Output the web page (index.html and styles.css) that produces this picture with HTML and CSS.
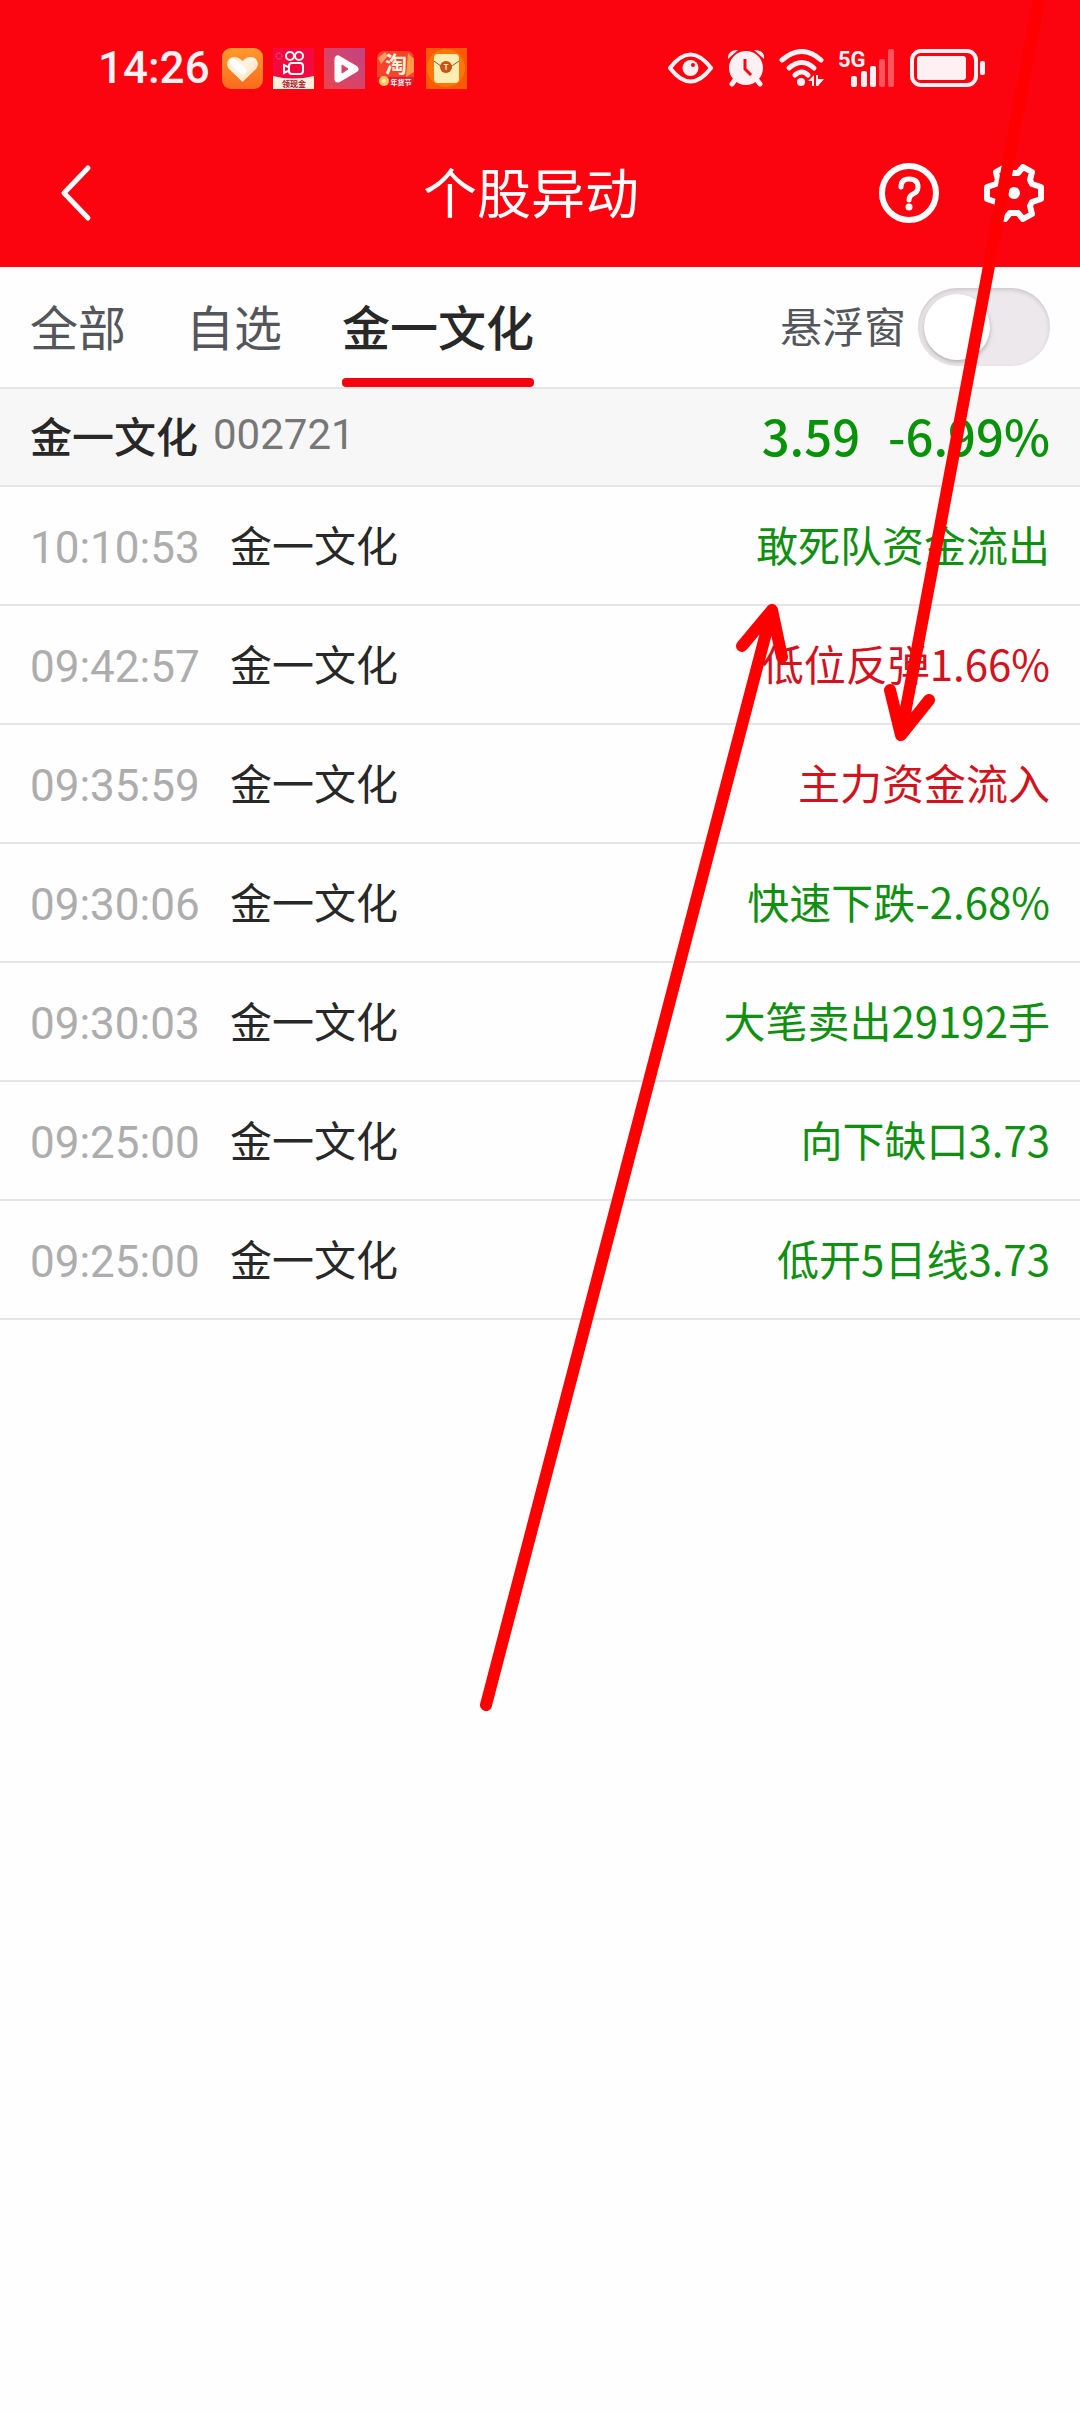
FILE: index.html
```
<!DOCTYPE html>
<html lang="zh-CN">
<head>
  <meta charset="UTF-8" />
  <meta name="viewport" content="width=device-width, initial-scale=1" />
  <title>个股异动</title>
  <link rel="stylesheet" href="styles.css">
</head>
<body>

  <header class="top">
    <div class="status-bar">
      <div class="status-left">
        <span class="clock">14:26</span>
        <svg class="app-icon" viewBox="0 0 41 41">
          <defs>
            <linearGradient id="orange" x1="0" y1="0" x2="0" y2="1"><stop offset="0" stop-color="#ff9a2c"/><stop offset="1" stop-color="#fb6a1c"/></linearGradient>
            <linearGradient id="cream" x1="0" y1="0" x2="1" y2="1"><stop offset="0" stop-color="#ffe3b4"/><stop offset=".4" stop-color="#fff4e4"/><stop offset="1" stop-color="#ffdcb0"/></linearGradient>
          </defs>
          <rect width="41" height="41" rx="9" fill="url(#orange)"/>
          <path d="M20.500 34 L7 21 C3 16 6 9 12 9 C16 9 18.500 11 20.500 13 C22.500 11 25 9 29 9 C35 9 38 16 34 21 Z" fill="url(#cream)"/>
          <path d="M11 14 L21 23" stroke="#fff" stroke-width="7" stroke-linecap="round"/>
        </svg>
        <svg class="app-icon" viewBox="0 0 41 41">
          <rect width="41" height="41" fill="#f2093f"/>
          <path d="M0 28 Q20 33 41 28 V41 H0 Z" fill="#fff0dc"/>
          <g fill="none" stroke="#fff" stroke-width="2">
            <circle cx="17" cy="8" r="4"/><circle cx="26" cy="8" r="4"/>
            <rect x="16" y="15" width="14" height="11" rx="3"/>
            <path d="M15 19 L11 17 V25 L15 23"/>
          </g>
          <circle cx="6" cy="8" r="3" fill="none" stroke="#ff7a90" stroke-dasharray="1 1"/>
          <text x="21" y="39" class="tag-red">领现金</text>
        </svg>
        <svg class="app-icon" viewBox="0 0 41 41">
          <defs><linearGradient id="pink" x1="1" y1="0" x2="0" y2="1"><stop offset="0" stop-color="#c14385"/><stop offset="1" stop-color="#e94450"/></linearGradient></defs>
          <rect width="41" height="41" fill="url(#pink)"/>
          <path d="M14 11 V31 L31 21 Z" fill="#fff" stroke="#fff" stroke-width="7" stroke-linejoin="round"/>
          <path d="M18 17 V25 L24 21 Z" fill="#d94468" stroke="#d94468" stroke-width="1" stroke-linejoin="round"/>
        </svg>
        <svg class="app-icon" viewBox="0 0 41 41">
          <rect x="2" y="3" width="37" height="35" rx="7" fill="#f5432c"/>
          <path d="M3 10 L10 4 L13 8 L6 16 Z" fill="#ff9a68"/>
          <path d="M33 5 L39 11 V24 L31 29 Z" fill="#ff9b4a"/>
          <path d="M2 29 H39 V31 Q39 38 32 38 H9 Q2 38 2 31 Z" fill="#e51b2d"/>
          <text x="21" y="24" class="tag-big">淘</text>
          <circle cx="9" cy="33" r="5" fill="#ffc35b"/>
          <circle cx="9" cy="33" r="2" fill="#fff0b0"/>
          <text x="26" y="37" class="tag-white">年货节</text>
        </svg>
        <svg class="app-icon" viewBox="0 0 41 41">
          <rect width="41" height="41" fill="#fb5a04"/>
          <circle cx="20" cy="20" r="19" fill="#fc7606"/>
          <rect x="8" y="6" width="25" height="29" rx="4" fill="#ffedb2"/>
          <path d="M8 13 Q20 25 33 13" fill="none" stroke="#9d4c1c" stroke-width="1"/>
          <circle cx="20" cy="19" r="6" fill="#c45516"/>
          <text x="20" y="22" class="tag-t">T</text>
        </svg>
      </div>

      <div class="status-right">
        <svg width="45" height="38" viewBox="0 0 45 38">
          <path d="M2 19 Q22.500 -8 43 19 Q22.500 46 2 19 Z" fill="none" stroke="#fff0f4" stroke-width="4" stroke-linejoin="round"/>
          <circle cx="22.500" cy="19" r="8" fill="#fff0f4"/>
          <circle cx="25" cy="16" r="2" fill="#fb0410"/>
        </svg>
        <svg width="38" height="38" viewBox="0 0 38 38">
          <circle cx="19" cy="19" r="17" fill="#fff0f4"/>
          <path d="M8 31 L5 35 M30 31 L33 35" stroke="#fff0f4" stroke-width="5" stroke-linecap="round"/>
          <path d="M1 10 Q0 1 11 1 Z M37 10 Q38 1 27 1 Z" fill="#fff0f4"/>
          <path d="M18 10 V20 L24 26" fill="none" stroke="#fb0410" stroke-width="3"/>
        </svg>
        <svg width="45" height="38" viewBox="1 0 45 38">
          <g fill="none" stroke="#fff0f4" stroke-width="5" stroke-linecap="round">
            <path d="M4 11 Q24 -6 43 11"/>
            <path d="M11 19 Q24 8 36 19"/>
            <path d="M17 26 Q24 20 30 26"/>
          </g>
          <circle cx="23" cy="33" r="4" fill="#fff0f4"/>
          <path d="M30 32 L36 26 V37 H34 V32 Z M38 26 H40 V30 H46 L40 37 H38 Z" fill="#fff0f4"/>
        </svg>
        <svg class="signal-icon" width="58" height="38" viewBox="0 0 58 38">
          <text x="0" y="18" class="net">5G</text>
          <g fill="#fff0f4">
            <rect x="13" y="27" width="6" height="11" rx="2"/>
            <rect x="23" y="22" width="6" height="16" rx="2"/>
            <rect x="32" y="17" width="6" height="21" rx="2"/>
          </g>
          <g fill="#ff5460">
            <rect x="41" y="10" width="6" height="28" rx="2"/>
            <rect x="50" y="0" width="6" height="38" rx="2"/>
          </g>
        </svg>
        <svg width="76" height="38" viewBox="0 0 76 38">
          <rect x="2" y="2" width="64" height="34" rx="9" fill="none" stroke="#fff0f4" stroke-width="4"/>
          <rect x="7" y="7" width="49" height="24" rx="3" fill="#fff0f4"/>
          <rect x="70" y="12" width="5" height="14" rx="2" fill="#fff0f4"/>
        </svg>
      </div>
    </div>

    <nav class="nav-bar">
      <button class="icon-btn back-btn" type="button" aria-label="返回">
        <svg width="32" height="58" viewBox="0 0 32 58"><path d="M28 4 L4 29 L28 54" fill="none" stroke="#fff" stroke-width="5" stroke-linecap="round" stroke-linejoin="round"/></svg>
      </button>
      <h1>个股异动</h1>
      <div class="nav-actions">
        <button class="icon-btn" type="button" aria-label="帮助">
          <svg width="60" height="60" viewBox="0 0 60 60">
            <circle cx="30" cy="30" r="27" fill="none" stroke="#fff" stroke-width="6"/>
            <path d="M22 24 Q22 16 30 16 Q39 16 39 24 Q39 29 34 31 Q30 33 30 37" fill="none" stroke="#fff" stroke-width="5" stroke-linecap="round"/>
            <circle cx="30" cy="44" r="3.500" fill="#fff"/>
          </svg>
        </button>
        <button class="icon-btn" type="button" aria-label="设置">
          <svg width="60" height="60" viewBox="-30 -30 60 60">
            <polygon points="27,-6 27,6 18,9 16,13 18,21 9,26 4,20 -4,20 -9,26 -18,21 -16,13 -18,9 -27,6 -27,-6 -18,-9 -16,-13 -18,-21 -9,-26 -4,-20 4,-20 9,-26 18,-21 16,-13 18,-9" fill="none" stroke="#fff" stroke-width="6" stroke-linejoin="round"/>
            <circle r="6" fill="#fff"/>
          </svg>
        </button>
      </div>
    </nav>
  </header>

  <div class="tab-bar">
    <div class="tabs">
      <button class="tab" type="button">全部</button>
      <button class="tab" type="button">自选</button>
      <button class="tab active" type="button">金一文化</button>
    </div>
    <div class="float-switch">
      <label for="float-window">悬浮窗</label>
      <input type="checkbox" id="float-window" class="switch" />
    </div>
  </div>

  <section class="stock">
    <h2>金一文化</h2>
    <span class="code">002721</span>
    <span class="price">3.59</span>
    <span class="change">-6.99%</span>
  </section>

  <table class="events">
    <tbody>
      <tr><td class="time">10:10:53</td><td>金一文化</td><td class="signal down">敢死队资金流出</td></tr>
      <tr><td class="time">09:42:57</td><td>金一文化</td><td class="signal up">低位反弹1.66%</td></tr>
      <tr><td class="time">09:35:59</td><td>金一文化</td><td class="signal up">主力资金流入</td></tr>
      <tr><td class="time">09:30:06</td><td>金一文化</td><td class="signal down">快速下跌-2.68%</td></tr>
      <tr><td class="time">09:30:03</td><td>金一文化</td><td class="signal down">大笔卖出29192手</td></tr>
      <tr><td class="time">09:25:00</td><td>金一文化</td><td class="signal down">向下缺口3.73</td></tr>
      <tr><td class="time">09:25:00</td><td>金一文化</td><td class="signal down">低开5日线3.73</td></tr>
    </tbody>
  </table>

  <!-- hand-drawn arrows over the list -->
  <svg class="marks" viewBox="0 0 1080 1720" aria-hidden="true">
    <path d="M1040 -6 L901 735 M890 690 L901 735 L929 700"/>
    <path d="M486 1705 L772 610 M742 646 L772 610 L782 657"/>
  </svg>

</body>
</html>
```
FILE: styles.css
```
* {
  box-sizing: border-box;
}

body {
  position: relative;
  margin: 0;
  min-height: 100vh;
  background-color: #fefefe;
  color: #282828;
  font-family: "Noto Sans CJK SC", sans-serif;
  font-size: 42px;
  line-height: 60px;
}

button {
  padding: 0;
  border: 0;
  background: none;
  color: inherit;
  font: inherit;
}

svg {
  display: block;
}

/* status bar + title */
.top {
  background-color: #fb0410;
  color: #fff;
}

.status-bar {
  display: flex;
  justify-content: space-between;
  align-items: center;
  height: 118px;
  padding: 18px 94px 0 98px;
}

.status-left,
.status-right {
  display: flex;
  align-items: center;
}

.status-left {
  gap: 10px;
}

.status-right {
  gap: 14px;
}

.clock {
  margin-right: 2px;
  color: #fff0f4;
  font-family: Roboto, sans-serif;
  font-size: 44px;
  font-weight: 500;
}

.app-icon {
  width: 41px;
  height: 41px;
}

.app-icon,
.signal-icon {
  overflow: visible;
}

.tag-red,
.tag-white,
.tag-big,
.tag-t {
  text-anchor: middle;
  font-weight: 700;
}

.tag-red {
  font-size: 8px;
  fill: #a8122a;
}

.tag-white {
  font-size: 7px;
  fill: #fff;
}

.tag-big {
  font-size: 22px;
  fill: #fff3dc;
}

.tag-t {
  font-size: 8px;
  fill: #ffe0a0;
}

.net {
  font-family: Roboto, sans-serif;
  font-size: 22px;
  font-weight: 700;
  fill: #fff0f4;
}

.nav-bar {
  display: grid;
  grid-template-columns: 1fr auto 1fr;
  align-items: center;
  height: 149px;
  padding: 0 36px 0 18px;
}

.nav-bar h1 {
  margin: 0;
  padding-bottom: 4px;
  font-size: 54px;
  font-weight: 400;
  line-height: 60px;
}

.icon-btn {
  display: flex;
  justify-content: center;
}

.back-btn {
  width: 116px;
}

.nav-actions {
  display: flex;
  justify-content: flex-end;
  gap: 45px;
}

/* tabs */
.tab-bar {
  display: flex;
  justify-content: space-between;
  height: 122px;
  padding: 0 30px;
  border-bottom: 2px solid #e5e5e8;
}

.tabs {
  display: flex;
  gap: 60px;
}

.tab {
  padding-bottom: 4px;
  color: #55565b;
  font-size: 48px;
}

.tab.active {
  display: flex;
  flex-direction: column;
  justify-content: space-between;
  padding: 0;
  color: #282828;
  font-weight: 500;
}

.tab.active::before,
.tab.active::after {
  content: "";
  width: 100%;
  height: 5px;
}

.tab.active::after {
  height: 9px;
  border-radius: 4px;
  background-color: #f5040f;
}

.float-switch {
  display: flex;
  align-items: center;
  gap: 12px;
  color: #55565b;
}

.float-switch label {
  padding-bottom: 4px;
}

.switch {
  appearance: none;
  width: 132px;
  height: 78px;
  margin: 0;
  padding: 6px;
  border-radius: 39px;
  background-color: #ece8ec;
  box-shadow: inset 0 2px 4px rgba(0, 0, 0, 0.15);
}

.switch::before {
  content: "";
  display: block;
  width: 66px;
  height: 66px;
  border-radius: 50%;
  background-color: #fff;
  box-shadow: 0 2px 4px rgba(0, 0, 0, 0.25);
}

.switch:checked::before {
  margin-left: auto;
}

/* current stock */
.stock {
  display: flex;
  align-items: center;
  height: 98px;
  padding: 0 30px 4px;
  background-color: #f7f7f7;
  border-bottom: 2px solid #e5e5e8;
}

.stock h2 {
  margin: 0 15px 0 0;
  font-size: 42px;
  font-weight: 500;
}

.code {
  color: #777;
  font-family: Roboto, sans-serif;
}

.price,
.change {
  color: #079207;
  font-size: 49px;
  font-weight: 500;
}

.price {
  margin-left: auto;
  margin-right: 28px;
}

/* event list */
.events {
  width: 100%;
  border-collapse: separate;
  border-spacing: 0;
}

.events td {
  height: 119px;
  padding: 0 0 4px;
  border-bottom: 2px solid #e5e5e8;
  white-space: nowrap;
}

.events .time {
  width: 230px;
  padding: 4px 0 0 30px;
  color: #adadad;
  font-family: Roboto, sans-serif;
  font-size: 44px;
}

.events .signal {
  padding-right: 30px;
  text-align: right;
}

.down {
  color: #109010;
}

.up {
  color: #d4121d;
}

.marks {
  position: absolute;
  top: 0;
  left: 0;
  width: 100%;
  fill: none;
  stroke: #f00;
  stroke-width: 12px;
  stroke-linecap: round;
  stroke-linejoin: round;
  pointer-events: none;
}
```
